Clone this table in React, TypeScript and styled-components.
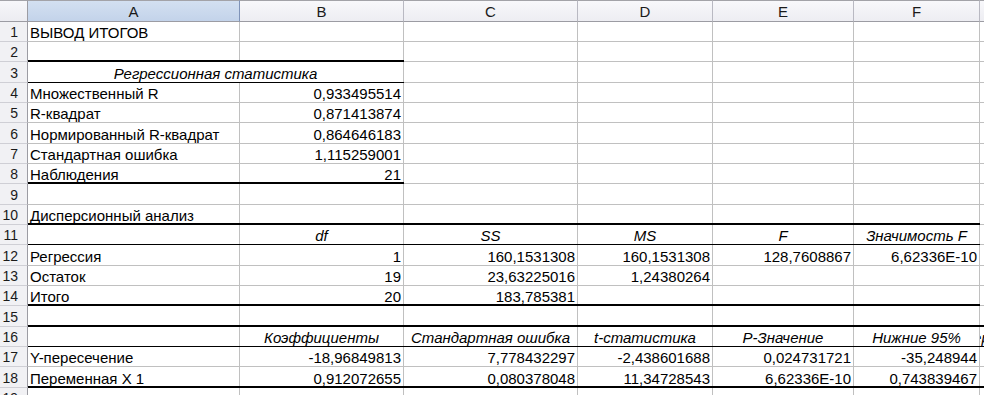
import React from 'react';
import styled, { createGlobalStyle, css } from 'styled-components';

const GlobalStyle = createGlobalStyle`
  html, body {
    margin: 0;
    padding: 0;
    background: #ffffff;
    overflow: hidden;
  }
  body {
    font-family: "Liberation Sans", Arial, sans-serif;
  }
`;

type Align = 'left' | 'right' | 'center';
type Rule = 'thin' | 'thick';

interface CellData {
  text?: string;
  align?: Align;
  italic?: boolean;
  span?: number;
}

interface RowData {
  cells: CellData[];
  rule?: Rule;
  ruleCols?: number;
}

const ROW_HEAD_WIDTH = 28;
const COL_WIDTHS = [212, 164, 174, 135, 141, 126, 60];
const LETTERS = ['A', 'B', 'C', 'D', 'E', 'F', 'G'];
const HEADER_HEIGHT = 22;

const L = (text: string): CellData => ({ text, align: 'left' });
const N = (text: string): CellData => ({ text, align: 'right' });
const H = (text: string): CellData => ({ text, align: 'center', italic: true });
const E: CellData = {};

const ROWS: RowData[] = [
  { cells: [L('ВЫВОД ИТОГОВ')] },
  { cells: [], rule: 'thick', ruleCols: 2 },
  {
    cells: [{ text: 'Регрессионная статистика', align: 'center', italic: true, span: 2 }],
    rule: 'thin',
    ruleCols: 2,
  },
  { cells: [L('Множественный R'), N('0,933495514')] },
  { cells: [L('R-квадрат'), N('0,871413874')] },
  { cells: [L('Нормированный R-квадрат'), N('0,864646183')] },
  { cells: [L('Стандартная ошибка'), N('1,115259001')] },
  { cells: [L('Наблюдения'), N('21')], rule: 'thick', ruleCols: 2 },
  { cells: [] },
  { cells: [L('Дисперсионный анализ')], rule: 'thick', ruleCols: 6 },
  {
    cells: [E, H('df'), H('SS'), H('MS'), H('F'), H('Значимость F')],
    rule: 'thin',
    ruleCols: 6,
  },
  {
    cells: [
      L('Регрессия'),
      N('1'),
      N('160,1531308'),
      N('160,1531308'),
      N('128,7608867'),
      N('6,62336E-10'),
    ],
  },
  { cells: [L('Остаток'), N('19'), N('23,63225016'), N('1,24380264')] },
  { cells: [L('Итого'), N('20'), N('183,785381')], rule: 'thick', ruleCols: 6 },
  { cells: [], rule: 'thick', ruleCols: 7 },
  {
    cells: [
      E,
      H('Коэффициенты'),
      H('Стандартная ошибка'),
      H('t-статистика'),
      H('P-Значение'),
      H('Нижние 95%'),
      H('Верхние 95%'),
    ],
    rule: 'thin',
    ruleCols: 7,
  },
  {
    cells: [
      L('Y-пересечение'),
      N('-18,96849813'),
      N('7,778432297'),
      N('-2,438601688'),
      N('0,024731721'),
      N('-35,248944'),
    ],
  },
  {
    cells: [
      L('Переменная X 1'),
      N('0,912072655'),
      N('0,080378048'),
      N('11,34728543'),
      N('6,62336E-10'),
      N('0,743839467'),
    ],
    rule: 'thick',
    ruleCols: 7,
  },
  { cells: [] },
];

// Rows alternate 20/20/21 px high, like a zoomed worksheet.
const rowHeight = (n: number) => (n % 3 === 0 ? 21 : 20);

const Sheet = styled.div<{ $cols: string; $rows: string }>`
  display: grid;
  grid-template-columns: ${(p) => p.$cols};
  grid-template-rows: ${(p) => p.$rows};
  width: max-content;
  background: #ffffff;
`;

const Corner = styled.div`
  background: linear-gradient(#f7f7fa, #ececf1);
  border-top: 1px solid #a3a3a8;
  border-right: 1px solid #9c9ca3;
  border-bottom: 1px solid #9c9ca3;
`;

const ColHead = styled.div<{ $selected?: boolean }>`
  display: flex;
  align-items: flex-end;
  justify-content: center;
  padding-bottom: 2px;
  font-size: 15px;
  line-height: 15px;
  color: #1a1a1a;
  border-top: 1px solid #a3a3a8;
  border-bottom: 1px solid #9c9ca3;
  border-right: 1px solid ${(p) => (p.$selected ? '#7f93b8' : '#b9b9c2')};
  background: ${(p) =>
    p.$selected
      ? 'linear-gradient(#d3e0f1, #c3d3ea)'
      : 'linear-gradient(#f8f8fb, #ededf2)'};
`;

const RowHead = styled.div`
  display: flex;
  align-items: flex-end;
  justify-content: flex-end;
  padding: 0 9px 1px 0;
  font-size: 14px;
  line-height: 15px;
  color: #1a1a1a;
  background: #f1f1f4;
  border-right: 1px solid #9c9ca3;
  border-bottom: 1px solid #cfcfd5;
`;

const Cell = styled.div<{ $span: number; $rule?: Rule }>`
  position: relative;
  grid-column: span ${(p) => p.$span};
  display: flex;
  border-right: 1px solid #c0c0c0;
  border-bottom: 1px solid #c0c0c0;
  min-width: 0;

  ${(p) =>
    p.$rule &&
    css`
      &::after {
        content: '';
        position: absolute;
        left: 0;
        right: -1px;
        bottom: -1px;
        height: ${p.$rule === 'thick' ? 2 : 1}px;
        background: #000000;
      }
    `}
`;

const CellText = styled.div<{ $align: Align; $italic?: boolean }>`
  flex: 1;
  min-width: 0;
  display: flex;
  align-items: flex-end;
  justify-content: ${(p) =>
    p.$align === 'right' ? 'flex-end' : p.$align === 'center' ? 'center' : 'flex-start'};
  padding: 0 2px 1px;
  overflow: hidden;
  white-space: nowrap;
  font-size: 15px;
  line-height: 15px;
  font-style: ${(p) => (p.$italic ? 'italic' : 'normal')};
  color: #000000;
`;

function fillRow(cells: CellData[]): CellData[] {
  const out = [...cells];
  let used = out.reduce((s, c) => s + (c.span ?? 1), 0);
  while (used < LETTERS.length) {
    out.push(E);
    used += 1;
  }
  return out;
}

export default function App() {
  const cols = [ROW_HEAD_WIDTH, ...COL_WIDTHS].map((w) => `${w}px`).join(' ');
  const rows = [HEADER_HEIGHT, ...ROWS.map((_, i) => rowHeight(i + 1))]
    .map((h) => `${h}px`)
    .join(' ');

  return (
    <>
      <GlobalStyle />
      <Sheet $cols={cols} $rows={rows}>
        <Corner />
        {LETTERS.map((l, i) => (
          <ColHead key={l} $selected={i === 0}>
            {l}
          </ColHead>
        ))}
        {ROWS.map((row, r) => {
          let col = 0;
          return (
            <React.Fragment key={r}>
              <RowHead>{r + 1}</RowHead>
              {fillRow(row.cells).map((cell, c) => {
                const span = cell.span ?? 1;
                const start = col;
                col += span;
                const ruled = row.rule && row.ruleCols !== undefined && start < row.ruleCols;
                return (
                  <Cell key={c} $span={span} $rule={ruled ? row.rule : undefined}>
                    <CellText $align={cell.align ?? 'left'} $italic={cell.italic}>
                      {cell.text}
                    </CellText>
                  </Cell>
                );
              })}
            </React.Fragment>
          );
        })}
      </Sheet>
    </>
  );
}
